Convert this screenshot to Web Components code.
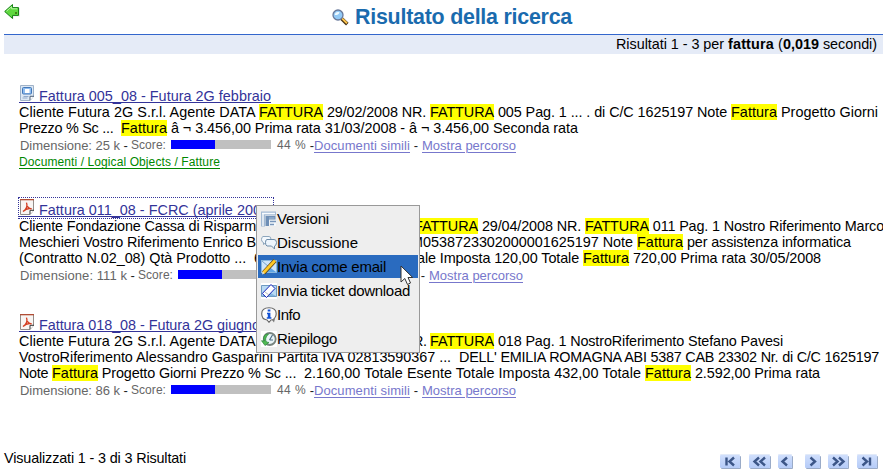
<!DOCTYPE html>
<html lang="it">
<head>
<meta charset="utf-8">
<title>Risultato della ricerca</title>
<style>
html,body{margin:0;background:#fff}
body{width:883px;height:472px;overflow:hidden;font:14.4px/16px "Liberation Sans",Arial,sans-serif;color:#000}
</style>
</head>
<body>
<search-page></search-page>
<script>
const ICONS = {
back:`<svg width="16" height="16" viewBox="0 0 16 16"><path d="M1.5 8L9.5 15.6V12.5H16V4H9.5z" fill="#ddd" opacity=".7"/><path d="M.7 7.5L8.5.5V3.6H14.5V11.4H8.5V14.5z" fill="#5fd83f" stroke="#168116"/><path d="M2.5 7.2L7.6 2.7V4.8H13.2" fill="none" stroke="#b5f6a0"/><path d="M12 10v-2" stroke="#36680c" stroke-width="1.5"/></svg>`,
lens:`<svg width="17" height="17" viewBox="0 0 17 17"><path d="M9.5 9.5l5.8 5.6" stroke="#443014" stroke-width="3.6"/><path d="M10 9.4l5 4.9" stroke="#ffc64d" stroke-width="1.9"/><circle cx="6" cy="6" r="5" fill="#93caf6" stroke="#68799b" stroke-width="1.3"/><path d="M2.7 6C3 3.2 5.5 2.4 7.6 3.5 6.4 5.6 5 6.4 2.7 6z" fill="#eefaff"/></svg>`,
doc:`<svg width="16" height="17" viewBox="0 0 16 17"><path d="M.5.5H13.5V11.5L10 15.5H.5z" fill="#dde8f4" stroke="#9fb2c8"/><path d="M14 11.3h-4v4" fill="#fff" stroke="#4d6078"/><rect x="2.5" y="2.5" width="9" height="6.500" rx="1" fill="#8fbdf0" stroke="#4377b8"/><rect x="5" y="4" width="4.500" height="4" fill="#fff"/><path d="M3.500 11.5h5M2.500 13h5" stroke="#91aacb"/></svg>`,
pdf:`<svg width="16" height="17" viewBox="0 0 16 17"><path d="M.5.5H13.5V11.5L10 15.5H.5z" fill="#f8f5f3" stroke="#938d89"/><path d="M0 .5h14" stroke="#b14d35" stroke-width="1.6"/><path d="M14 11.3h-4v4" fill="#fff" stroke="#333"/><path d="M3 12.5C7 9.7 7.8 7 6.5 3.7c.4 4.3 2 5.8 5.2 6.1-3-.8-5.8-.1-8.7 2.7z" fill="none" stroke="#d33e22" stroke-width="1.3"/></svg>`,
versions:`<svg width="16" height="16" viewBox="0 0 16 16"><path d="M0 .5h15v4H4v11H0z" fill="#a3bad4"/><path d="M1 2.500h13M2 2v13" stroke="#f8fbfe" stroke-width="1.400"/><path d="M4.500 5h10v3.500H8v6.500H4.500z" fill="#6f8fb6"/><path d="M8 7h5.500" stroke="#a9c0dc"/><path d="M8.500 9.500h6.500v5.500H8.500z" fill="#f4f8fc"/><path d="M9 10.500h6M9 13.500h4" stroke="#7896bb" stroke-width="1.600"/></svg>`,
talk:`<svg width="16" height="16" viewBox="0 0 16 16"><path d="M2 1.5h6q2 0 2 3t-2 3H5l-2.5 2v-2Q.5 7 .5 4.5t1.500-3z" fill="#f3f8fd" stroke="#8ca5bc"/><path d="M6 4.500h7q2.500 0 2.500 3t-2 3.500v3l-3-3H6Q4.500 10.500 4.500 7.500t1.500-3z" fill="#edf5fd" stroke="#6c8ba8"/></svg>`,
email:`<svg width="16" height="16" viewBox="0 0 16 16"><rect x=".5" y="1.500" width="15" height="12" fill="#cfe6fb" stroke="#88b7df"/><path d="M1 13l6-6 8 6z" fill="#5fa3e4"/><path d="M1 2l7 6 7-6" fill="none" stroke="#76a4cc"/><path d="M2.500 14L14 1.500" stroke="#5a4316" stroke-width="4.200"/><path d="M2.500 13.700L14 1.500" stroke="#ffc927" stroke-width="2.900"/><path d="M1 15.500l.7-3 2 1.800z" fill="#f7ecc6"/></svg>`,
ticket:`<svg width="16" height="16" viewBox="0 0 16 16"><path fill="#fff" d="M0 0h16v16H0z"/><path d="M.5 2.500h15v11H.5z" fill="#b9daf4" stroke="#6f9bc2"/><path d="M1 13l5-5 9 5z" fill="#83b5df"/><path d="M1.300 10.500L10 1.500 14 5.500 5.500 14.500z" fill="#fff" stroke="#1522b8"/><path d="M4 9l4 3" stroke="#bbb"/></svg>`,
info:`<svg width="16" height="16" viewBox="0 0 16 16"><path d="M11 13l2 2.500 1-4" fill="#777"/><path d="M8 .7c4.500 0 7.200 2.500 7.200 6.100S12.500 13 10 13l-2 2.300L6 13C3.200 12.700.7 10.500.7 6.800S3.500.7 8 .7z" fill="#fdfdfd" stroke="#666" stroke-width="1.100"/><path d="M6.700 2.500h2.700v2H6.700zM6 5.700h3.400v4.500h1v1.500H5.800v-1.500h1V7.300H6z" fill="#1453d4"/></svg>`,
clock:`<svg width="16" height="16" viewBox="0 0 16 16"><path fill="#fff" d="M0 0h16v16H0z"/><circle cx="8.700" cy="8" r="6" fill="#e9f4f7" stroke="#77847f" stroke-width="1.800"/><path d="M8.500 9l3-5M8.500 9h3.500" stroke="#4d6d83" stroke-width="1.200"/><path d="M5 3.200Q1.200 6 3.500 10l-3-.3L4 14.500l4-3-2.500-.5Q3 7.500 7.500 3z" fill="#51bb54" stroke="#288539" stroke-width=".7"/></svg>`,
cursor:`<svg width="14" height="22" viewBox="0 0 14 22"><path d="M1 1V17L4.800 13.500 7.500 19.500 10.500 18 8 12.500H12.700z" fill="#fff" stroke="#333"/></svg>`,
first:`<path d="M6.500 2.500v8M14 2.500l-4.500 4 4.500 4"/>`,
prev2:`<path d="M10 2.500l-4.500 4 4.500 4M16 2.500l-4.500 4 4.500 4"/>`,
prev:`<path d="M9 2.500l-4.500 4 4.500 4"/>`,
next:`<path d="M5.500 2.500l4.500 4-4.500 4"/>`,
next2:`<path d="M5 2.500l4.500 4-4.500 4M11 2.500l4.500 4-4.500 4"/>`,
last:`<path d="M5.500 2.500l4.500 4-4.500 4M13 2.500v8"/>`
};

const fragment = html => document.createRange().createContextualFragment(html);

function define(name, html, setup) {
  const t = document.createElement('template');
  t.innerHTML = html;
  customElements.define(name, class extends HTMLElement {
    connectedCallback() {
      if (this.shadowRoot) return;
      this.attachShadow({mode: 'open'}).append(t.content.cloneNode(true));
      if (setup) setup(this, this.shadowRoot);
    }
  });
}

define('ui-icon', `<style>:host{display:inline-flex;flex:none}svg{display:block}</style>`,
  (h, r) => r.append(fragment(ICONS[h.getAttribute('name')] || '')));

// A run of text tracked to fill the width "w"; "hl" marks a search hit.
define('fit-text', `<style>
:host{display:inline-block;white-space:pre;flex:none}
:host([hl]){background:#ff0}
</style><slot></slot>`, h => {
  const w = +h.getAttribute('w');
  if (!w) return;
  const n = h.textContent.length;
  if (n) h.style.letterSpacing = ((w - h.getBoundingClientRect().width) / n).toFixed(4) + 'px';
  h.style.width = w + 'px';
});

define('text-line', `<style>:host{display:flex;height:16px;line-height:17px}</style><slot></slot>`);

define('score-bar', `<style>
:host{display:block;flex:none;width:100px;height:9px;background:#c0c0c0;margin:0 6px 0 5px}
div{width:44%;height:9px;background:#00f}
</style><div></div>`);

// "covered" leaves room for the part that lies beneath an open menu.
define('result-meta', `<style>
:host{display:flex;height:17px;align-items:center;font-size:13px;line-height:17px;color:#666;padding-left:1px}
fit-text{margin-top:2px;height:17px}
.s{font-size:12px}.b{color:#222}
.l{color:#7777cc;text-decoration:underline;text-underline-offset:2px;text-decoration-thickness:1px}
.gap{flex:none;width:133px}
</style>`, (h, r) => {
  const middle = h.hasAttribute('covered')
    ? '<div class="gap"></div>'
    : '<fit-text class="s" w="29">44 %</fit-text><fit-text class="b" w="8"> -</fit-text><fit-text class="l" w="96">Documenti simili</fit-text>';
  r.append(fragment(`<fit-text w="${h.getAttribute('w')}">${h.getAttribute('size')}</fit-text><fit-text class="b" w="11"> - </fit-text><fit-text class="s" w="35">Score:</fit-text><score-bar></score-bar>${middle}<fit-text class="b" w="12"> - </fit-text><fit-text class="l" w="94">Mostra percorso</fit-text>`));
});

define('search-result', `<style>
:host{display:block;box-sizing:border-box;padding-left:19px}
.t{display:flex;height:20px;width:max-content;color:#333399}
.u{display:flex;box-sizing:border-box;height:19px;padding-left:1px;border-bottom:1px solid #333399}
.u ::slotted(*){margin:3px 0 0 4px;line-height:18px}
:host([focused]) .t{outline:1px dotted #333399;width:254px}
.i{display:block;height:17px;margin-top:1px;width:15px}
svg{display:block}
</style><div class="t"><div class="u"><div class="i"></div><slot name="title"></slot></div></div><slot></slot>`,
(h, r) => r.querySelector('.i').append(fragment(ICONS[h.getAttribute('icon')])));

define('menu-item', `<style>
:host{display:flex;align-items:center;height:24px;padding-left:3px;font-size:15px}
:host([active]){background:#2a6bbf;height:23px;margin-bottom:1px}
svg{display:block;flex:none}
</style>`, (h, r) => r.append(fragment(ICONS[h.getAttribute('icon')] + '<slot></slot>')));

define('context-menu', `<style>
:host{position:absolute;left:256px;top:205px;box-sizing:border-box;width:164px;height:148px;border:1px solid #999;background:#eee;padding:1px}
</style><slot></slot>`);

define('mouse-pointer', `<style>:host{position:absolute;left:400px;top:265px}</style><ui-icon name="cursor"></ui-icon>`);

define('page-button', `<style>
:host{display:block;flex:none;height:13px;background:linear-gradient(#d0dffc,#b5cbf8);border-radius:1px;box-shadow:1px 1px #9aabc8,0 -1px #e2eaf8}
svg{display:block;fill:none;stroke:#3c5688;stroke-width:2.4}
</style><svg height="13"></svg>`, (h, r) => {
  const w = h.getAttribute('w');
  h.style.width = w + 'px';
  const s = r.querySelector('svg');
  s.setAttribute('width', w);
  s.innerHTML = ICONS[h.getAttribute('icon')];
});

define('page-head', `<style>
:host{display:block;height:54px;padding-left:4px}
.top{display:flex;height:34px}
.top>ui-icon:first-child{margin-top:4px}
.lens{margin:9px 6px 0 312px}
.h{font-weight:bold;font-size:21.4px;line-height:35px;color:#1a6bae}
.bar{display:flex;justify-content:flex-end;box-sizing:border-box;height:20px;border-top:1px solid #3366cc;background:#e5ebf7;padding-right:6px;line-height:18px}
</style><div class="top"><ui-icon name="back"></ui-icon><ui-icon class="lens" name="lens"></ui-icon><fit-text class="h" w="217">Risultato della ricerca</fit-text></div>
<div class="bar"><fit-text w="112">Risultati 1 - 3 per </fit-text><fit-text w="46"><b>fattura</b></fit-text><fit-text w="9"> (</fit-text><fit-text w="36"><b>0,019</b></fit-text><fit-text w="58"> secondi)</fit-text></div>`);

define('page-foot', `<style>
:host{display:flex;align-items:flex-start;padding:0 6px 0 4px}
.nav{display:flex;margin:5px 0 0 auto}
</style><fit-text w="182">Visualizzati 1 - 3 di 3 Risultati</fit-text><div class="nav"><slot></slot></div>`);

define('search-page', `<style>
:host{display:block;position:relative;width:883px;height:472px;overflow:hidden}
.list{display:flex;flex-direction:column;height:366px;padding-top:30px;box-sizing:border-box}
.r1{height:114px}.r2{height:115px}
.path{color:#080;font-size:12px;line-height:18px;text-decoration:underline;text-underline-offset:2px}
page-foot{margin-top:30px}
</style>
<page-head></page-head>
<div class="list">
<search-result class="r1" icon="doc"><fit-text slot="title" w="232">Fattura 005_08 - Futura 2G febbraio</fit-text>
<text-line><fit-text w="240">Cliente Futura 2G S.r.l. Agente DATA </fit-text><fit-text hl w="64">FATTURA</fit-text><fit-text w="107"> 29/02/2008 NR. </fit-text><fit-text hl w="64">FATTURA</fit-text><fit-text w="237"> 005 Pag. 1 ... . di C/C 1625197 Note </fit-text><fit-text hl w="46">Fattura</fit-text><fit-text w="101"> Progetto Giorni</fit-text></text-line>
<text-line><fit-text w="102">Prezzo % Sc ...  </fit-text><fit-text hl w="46">Fattura</fit-text><fit-text w="411"> â ¬ 3.456,00 Prima rata 31/03/2008 - â ¬ 3.456,00 Seconda rata</fit-text></text-line>
<result-meta size="Dimensione: 25 k" w="100"></result-meta>
<text-line><fit-text class="path" w="201">Documenti / Logical Objects / Fatture</fit-text></text-line>
</search-result>
<search-result class="r2" icon="pdf" focused><fit-text slot="title" w="222">Fattura 011_08 - FCRC (aprile 200</fit-text>
<text-line><fit-text w="237">Cliente Fondazione Cassa di Risparm</fit-text><fit-text w="158"></fit-text><fit-text hl w="64">FATTURA</fit-text><fit-text w="107"> 29/04/2008 NR. </fit-text><fit-text hl w="64">FATTURA</fit-text><fit-text w="235"> 011 Pag. 1 Nostro Riferimento Marco</fit-text></text-line>
<text-line><fit-text w="237">Meschieri Vostro Riferimento Enrico B</fit-text><fit-text w="155"></fit-text><fit-text w="226">M0538723302000001625197 Note </fit-text><fit-text hl w="46">Fattura</fit-text><fit-text w="168"> per assistenza informatica</fit-text></text-line>
<text-line><fit-text w="243">(Contratto N.02_08) Qtà Prodotto ...  6</fit-text><fit-text w="155"></fit-text><fit-text w="166">ale Imposta 120,00 Totale </fit-text><fit-text hl w="46">Fattura</fit-text><fit-text w="192"> 720,00 Prima rata 30/05/2008</fit-text></text-line>
<result-meta size="Dimensione: 111 k" w="107" covered></result-meta>
</search-result>
<search-result icon="pdf"><fit-text slot="title" w="221">Fattura 018_08 - Futura 2G giugno</fit-text>
<text-line><fit-text w="240">Cliente Futura 2G S.r.l. Agente DATA </fit-text><fit-text w="154"></fit-text><fit-text w="17">R. </fit-text><fit-text hl w="64">FATTURA</fit-text><fit-text w="289"> 018 Pag. 1 NostroRiferimento Stefano Pavesi</fit-text></text-line>
<text-line><fit-text w="440">VostroRiferimento Alessandro Gasparini Partita IVA 02813590367 ...  </fit-text><fit-text w="420">DELL' EMILIA ROMAGNA ABI 5387 CAB 23302 Nr. di C/C 1625197</fit-text></text-line>
<text-line><fit-text w="33">Note </fit-text><fit-text hl w="46">Fattura</fit-text><fit-text w="206"> Progetto Giorni Prezzo % Sc ...  </fit-text><fit-text w="341">2.160,00 Totale Esente Totale Imposta 432,00 Totale </fit-text><fit-text hl w="46">Fattura</fit-text><fit-text w="129"> 2.592,00 Prima rata</fit-text></text-line>
<result-meta size="Dimensione: 86 k" w="100"></result-meta>
</search-result>
</div>
<page-foot>
<page-button icon="first" w="20"></page-button><page-button icon="prev2" w="21" style="margin-left:9px"></page-button><page-button icon="prev" w="14" style="margin-left:8px"></page-button><page-button icon="next" w="15" style="margin-left:13px"></page-button><page-button icon="next2" w="20" style="margin-left:8px"></page-button><page-button icon="last" w="20" style="margin-left:9px"></page-button>
</page-foot>
<context-menu>
<menu-item icon="versions"><fit-text w="52">Versioni</fit-text></menu-item>
<menu-item icon="talk"><fit-text w="81">Discussione</fit-text></menu-item>
<menu-item icon="email" active><fit-text w="109">Invia come email</fit-text></menu-item>
<menu-item icon="ticket"><fit-text w="133">Invia ticket download</fit-text></menu-item>
<menu-item icon="info"><fit-text w="23">Info</fit-text></menu-item>
<menu-item icon="clock"><fit-text w="60">Riepilogo</fit-text></menu-item>
</context-menu>
<mouse-pointer></mouse-pointer>`);
</script>
</body>
</html>
